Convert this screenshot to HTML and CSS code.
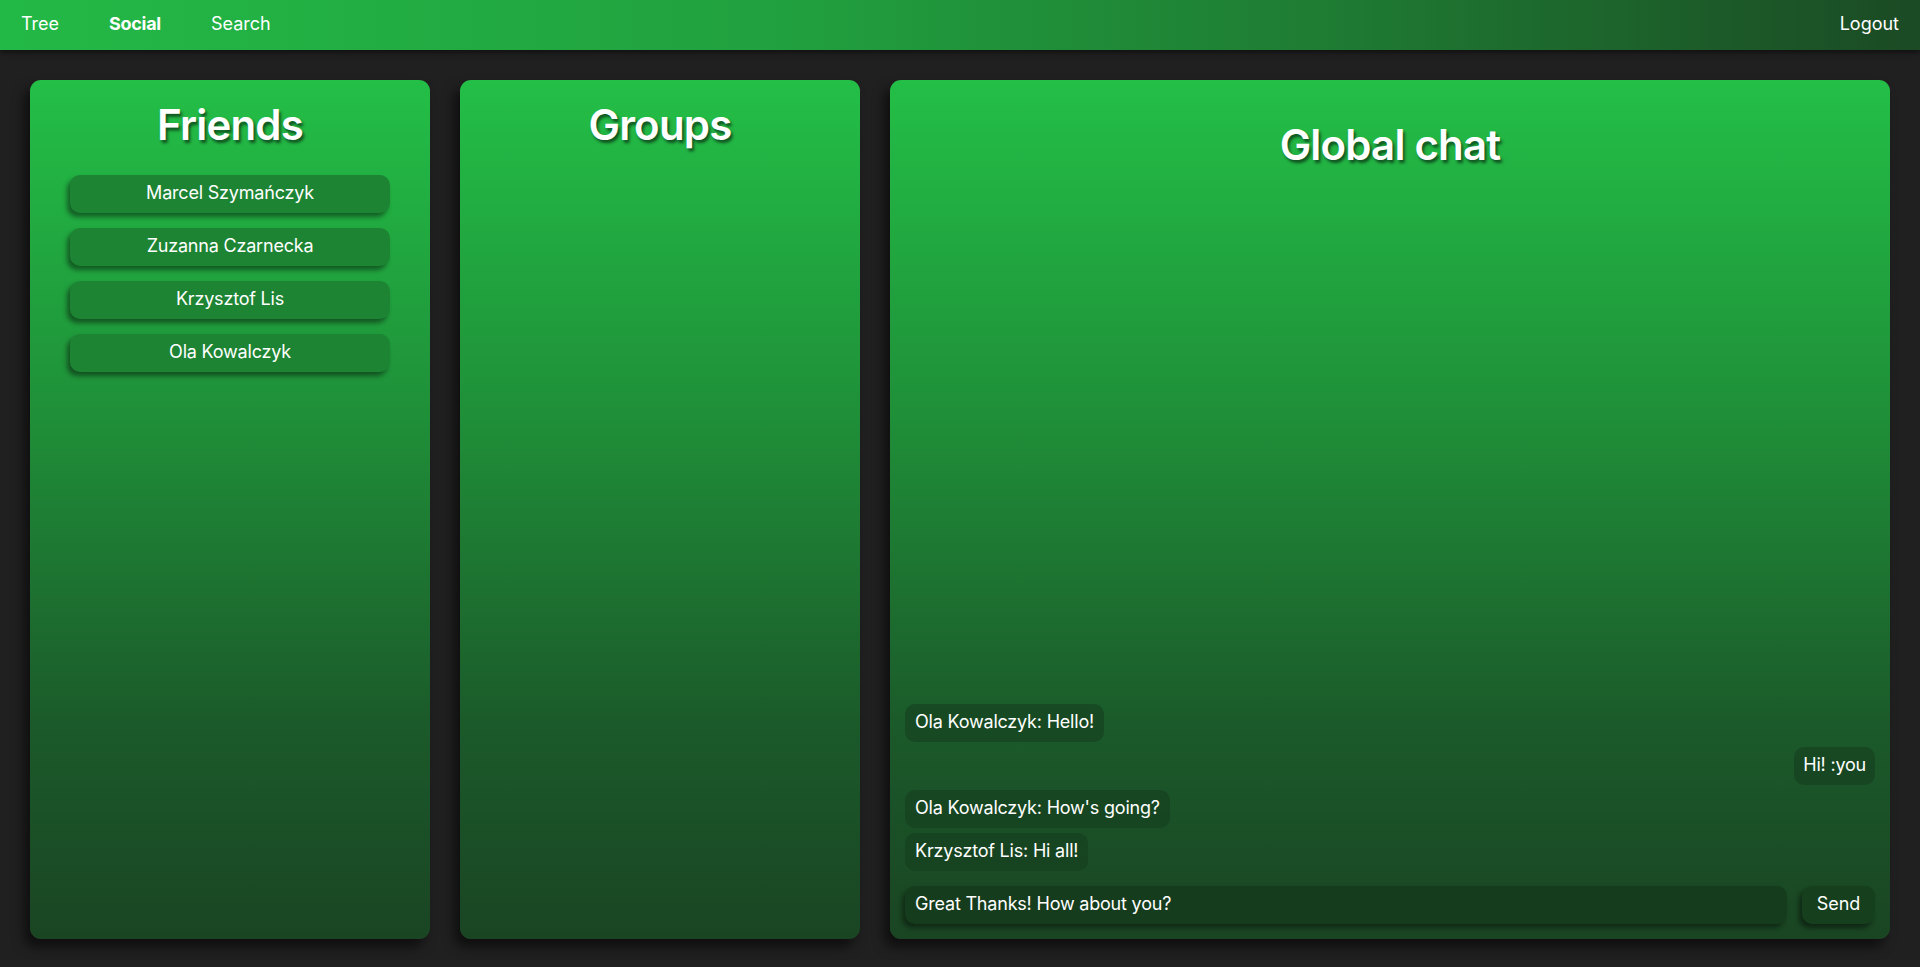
FILE: index.html
```html
<!DOCTYPE html>
<html lang="en">
<head>
<meta charset="utf-8">
<title>Social</title>
<link rel="stylesheet" href="styles.css">
</head>
<body>
<nav class="navbar">
  <div class="nav-links">
    <a class="nav-link">Tree</a>
    <a class="nav-link active">Social</a>
    <a class="nav-link">Search</a>
  </div>
  <a class="nav-link">Logout</a>
</nav>
<main class="layout">
  <section class="panel">
    <h2 class="panel-title">Friends</h2>
    <ul class="friend-list">
      <li class="friend">Marcel Szymańczyk</li>
      <li class="friend">Zuzanna Czarnecka</li>
      <li class="friend">Krzysztof Lis</li>
      <li class="friend">Ola Kowalczyk</li>
    </ul>
  </section>
  <section class="panel">
    <h2 class="panel-title">Groups</h2>
  </section>
  <section class="panel chat">
    <h2 class="panel-title chat-title">Global chat</h2>
    <div class="messages">
      <div class="msg">Ola Kowalczyk: Hello!</div>
      <div class="msg mine">Hi! :you</div>
      <div class="msg">Ola Kowalczyk: How's going?</div>
      <div class="msg">Krzysztof Lis: Hi all!</div>
    </div>
    <div class="composer">
      <div class="input">Great Thanks! How about you?</div>
      <button class="send">Send</button>
    </div>
  </section>
</main>
</body>
</html>
```
FILE: styles.css
```css
* { box-sizing: border-box; }
html, body { margin: 0; padding: 0; }
body {
  background: #202020;
  font-family: Inter, "Open Sans", sans-serif;
  color: #fff;
  height: 967px;
  overflow: hidden;
}
.navbar {
  height: 50px;
  display: flex;
  align-items: center;
  justify-content: space-between;
  padding: 0 21px 3px 21px;
  background: linear-gradient(90deg, #23b946 0%, #21a13f 40%, #1e7a32 70%, #1b4a24 100%);
  box-shadow: 0 2px 6px rgba(0,0,0,0.6);
  position: relative;
  z-index: 2;
}
.nav-links { display: flex; gap: 50px; }
.nav-link {
  font-size: 18px;
  color: #fff;
}
.nav-link.active { font-weight: 700; letter-spacing: -0.3px; }
.layout {
  display: flex;
  gap: 30px;
  padding: 30px 30px 0 30px;
}
.panel {
  width: 400px;
  height: 859px;
  border-radius: 11px;
  background: linear-gradient(180deg, #23bf47 0%, #1f8e38 40%, #1b5a2a 75%, #1a4523 100%);
  box-shadow: -6px 8px 12px rgba(0,0,0,0.55);
  display: flex;
  flex-direction: column;
  align-items: stretch;
}
.panel-title {
  margin: 20px 0 0 0;
  font-size: 42px;
  line-height: 50px;
  font-weight: 600;
  text-align: center;
  letter-spacing: -0.8px;
  text-shadow: 2px 3px 3px rgba(10,50,20,0.75);
}
.friend-list {
  list-style: none;
  margin: 25px 40px 0 40px;
  padding: 0;
  display: flex;
  flex-direction: column;
  gap: 15px;
}
.friend {
  height: 38px;
  border-radius: 10px;
  background: #1d8433;
  box-shadow: -3px 4px 5px rgba(0,0,0,0.45);
  display: flex;
  align-items: center;
  justify-content: center;
  padding-bottom: 3px;
  font-size: 18px;
  letter-spacing: -0.2px;
}
.chat { width: 1000px; }
.chat-title { margin-top: 40px; }
.messages {
  flex: 1;
  display: flex;
  flex-direction: column;
  justify-content: flex-end;
  align-items: flex-start;
  gap: 5px;
  padding: 0 15px;
}
.msg {
  height: 38px;
  display: flex;
  align-items: center;
  padding: 0 10px 3px 10px;
  border-radius: 10px;
  background: rgba(20,60,30,0.55);
  font-size: 18px;
  letter-spacing: -0.2px;
}
.msg.mine { align-self: flex-end; padding: 0 9px 3px 9px; }
.composer {
  display: flex;
  gap: 15px;
  padding: 15px;
}
.input {
  flex: 1;
  height: 38px;
  border-radius: 10px;
  background: #163c1e;
  box-shadow: -3px 4px 5px rgba(0,0,0,0.4);
  display: flex;
  align-items: center;
  padding: 0 10px 3px 10px;
  font-size: 18px;
  letter-spacing: -0.2px;
}
.send {
  width: 73px;
  height: 38px;
  border: none;
  border-radius: 10px;
  background: #163f1e;
  box-shadow: -3px 4px 5px rgba(0,0,0,0.45);
  color: #fff;
  font-family: inherit;
  font-size: 18px;
  padding: 0 0 3px 0;
}
```
